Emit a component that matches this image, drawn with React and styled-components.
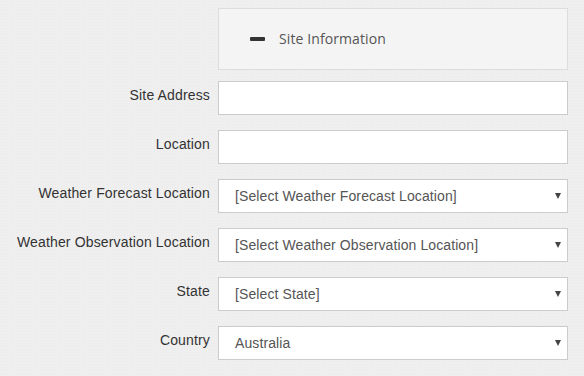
import React from "react";
import styled, { createGlobalStyle } from "styled-components";

const GlobalStyle = createGlobalStyle`
  html, body {
    margin: 0;
    padding: 0;
    background: #efefef;
  }
  body {
    font-family: "Liberation Sans", Arial, sans-serif;
  }
`;

const Page = styled.div`
  width: 584px;
  height: 376px;
  padding-top: 8px;
  box-sizing: border-box;
  background-color: #efefef;
  background-image: radial-gradient(rgba(0, 0, 0, 0.018) 1px, transparent 1px);
  background-size: 3px 3px;
`;

const Form = styled.div`
  display: grid;
  grid-template-columns: 210px 350px;
  column-gap: 8px;
  row-gap: 15px;
  align-items: start;
`;

const PanelHeader = styled.div`
  grid-column: 2;
  height: 62px;
  box-sizing: border-box;
  display: flex;
  align-items: center;
  padding-left: 31px;
  padding-bottom: 2px;
  gap: 14px;
  background: #f4f4f4;
  border: 1px solid #dddddd;
  margin-bottom: -4px;
`;

const Minus = styled.span`
  display: block;
  width: 15px;
  height: 4px;
  background: #333333;
  border-radius: 1px;
  margin-top: 1px;
`;

const PanelTitle = styled.span`
  font-family: "Open Sans", sans-serif;
  font-size: 14px;
  letter-spacing: 0.1px;
  color: #555555;
`;

const Label = styled.label`
  grid-column: 1;
  text-align: right;
  font-size: 14px;
  line-height: 20px;
  letter-spacing: 0.15px;
  padding-top: 4px;
  color: #333333;
  white-space: nowrap;
`;

const Field = styled.div`
  grid-column: 2;
  position: relative;
  height: 34px;
  box-sizing: border-box;
  background: #ffffff;
  border: 1px solid #cccccc;
  display: flex;
  align-items: center;
  padding-left: 16px;
  font-size: 14px;
  letter-spacing: 0.1px;
  color: #555555;
`;

const Arrow = styled.span`
  position: absolute;
  right: 6px;
  top: 13px;
  width: 0;
  height: 0;
  border-left: 3px solid transparent;
  border-right: 3px solid transparent;
  border-top: 6px solid #444444;
`;

const rows = [
  { label: "Site Address" },
  { label: "Location" },
  { label: "Weather Forecast Location", value: "[Select Weather Forecast Location]", select: true },
  { label: "Weather Observation Location", value: "[Select Weather Observation Location]", select: true },
  { label: "State", value: "[Select State]", select: true },
  { label: "Country", value: "Australia", select: true },
];

export default function App() {
  return (
    <Page>
      <GlobalStyle />
      <Form>
        <PanelHeader>
          <Minus />
          <PanelTitle>Site Information</PanelTitle>
        </PanelHeader>
        {rows.map((r) => (
          <React.Fragment key={r.label}>
            <Label>{r.label}</Label>
            <Field>
              {r.value}
              {r.select && <Arrow />}
            </Field>
          </React.Fragment>
        ))}
      </Form>
    </Page>
  );
}
